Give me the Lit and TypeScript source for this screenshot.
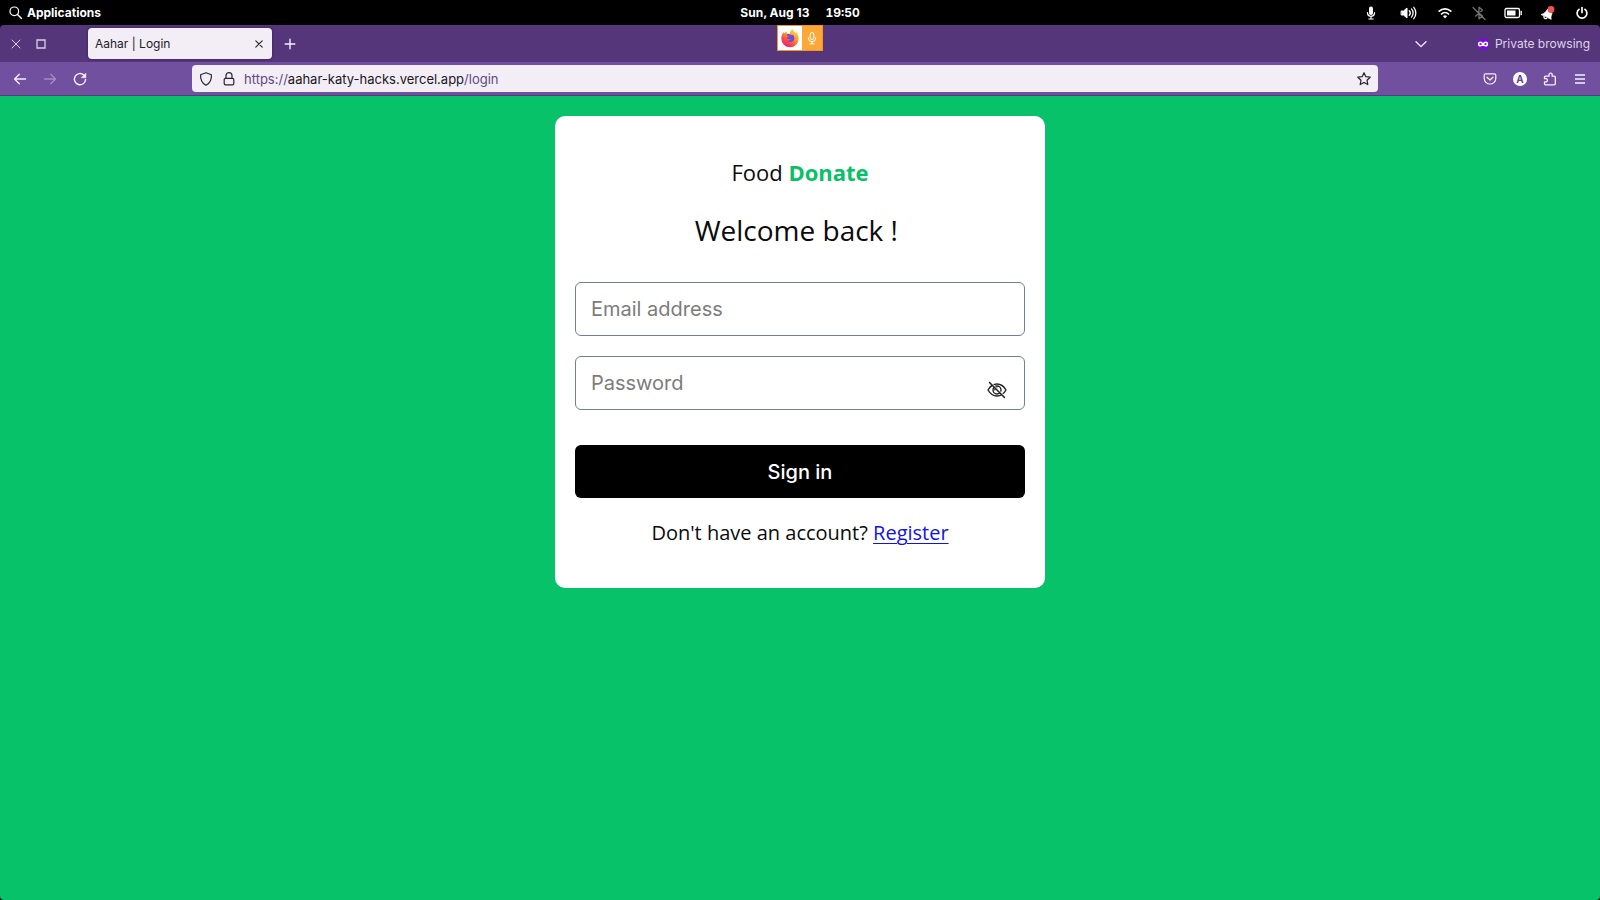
import { LitElement, html, css, svg, type TemplateResult } from "lit";
import { customElement, state } from "lit/decorators.js";

const icon = (body: TemplateResult, w = 16, h = 16) =>
  html`<svg width=${w} height=${h} viewBox="0 0 ${w} ${h}" fill="none" stroke="currentColor" stroke-width="1.2" stroke-linecap="round" stroke-linejoin="round" aria-hidden="true">${body}</svg>`;

const icons = {
  search: icon(svg`<circle cx="6.3" cy="6.3" r="4.3"/><path d="M9.5 9.5 13.5 13.5" stroke-width="1.5"/>`),
  mic: icon(svg`<rect x="7" y="1.500" width="4" height="8.500" rx="2" fill="currentColor" stroke="none"/><path d="M5.500 7.500v1a3.600 3.600 0 0 0 7 0v-1M9 12v2M6.800 14h4.400"/>`, 20),
  speaker: icon(svg`<path d="M1.500 6h2L7 3v10l-3.500-3h-2z" fill="currentColor" stroke-width="1"/><path d="M9.300 5.800a3.200 3.200 0 0 1 0 4.400M11.500 3.900a6 6 0 0 1 0 8.200M13.800 2.300a9 9 0 0 1 0 11.400" stroke-width="1.300"/>`, 20),
  wifi: icon(svg`<path d="M1.200 6.200a8.300 8.300 0 0 1 11.600 0" stroke-width="1.700"/><path d="M3.500 9a5 5 0 0 1 7 0" stroke-width="1.700"/><path d="M5 11.200a3 3 0 0 1 4 0L7 13.400z" fill="currentColor" stroke="none"/>`),
  bluetooth: icon(svg`<path d="M3.500 5 10.500 11 7 13.800V2.200L10.500 5 8.600 6.700M3.500 11.200 5.900 9.200M1 2.500 13 14.500"/>`, 14),
  battery: icon(svg`<rect x="1" y="3.500" width="14.500" height="9" rx="1.500" stroke-width="1.300"/><rect x="3" y="5.500" width="8.500" height="5" fill="currentColor" stroke="none"/><path d="M17.200 6.500v3" stroke-width="1.300"/>`, 18),
  bell: icon(svg`<path d="M1.500 9.500C4.500 8.800 6 6.500 7.800 4L12 8.500C11 10.500 10.800 12 11.100 14z" fill="currentColor" stroke-width=".8"/><path d="M4 11.300c-.5 1.600.9 2.800 2.700 2" stroke-width="1.300"/><circle cx="11" cy="4.500" r="3.400" fill="#ed5353" stroke="none"/>`),
  power: icon(svg`<path d="M5 4.300a4.900 4.900 0 1 0 6 0M8 2.500v5" stroke-width="1.700"/>`),
  close: icon(svg`<path d="M4 4l8 8M12 4l-8 8" stroke-width="1"/>`),
  maximize: icon(svg`<path d="M4 4h8v8H4z" stroke-width="1.300" stroke-linejoin="miter"/>`),
  tabClose: icon(svg`<path d="M4.800 4.800l6.400 6.400M11.200 4.800l-6.400 6.400" stroke-width="1.100"/>`),
  plus: icon(svg`<path d="M8 3.200v9.600M3.200 8h9.600" stroke-width="1.400"/>`),
  chevron: icon(svg`<path d="M3 5.800l5 4.800 5-4.800" stroke-width="1.300"/>`),
  back: icon(svg`<path d="M13.500 8H2.500M7.300 3.200 2.500 8l4.800 4.800" stroke-width="1.300"/>`),
  forward: icon(svg`<path d="M2.500 8h11M8.700 3.200 13.500 8l-4.800 4.800" stroke-width="1.300"/>`),
  reload: icon(svg`<path d="M13.600 8.500A5.600 5.600 0 1 1 11.800 4L13 5.300" stroke-width="1.400"/><path d="M13.800 2.500v4.200H9.600z" fill="currentColor" stroke-width=".6"/>`),
  shield: icon(svg`<path d="M8 1.800 13.400 3.700c.3 4.600-1 8.300-5.400 10.600C3.600 12 2.300 8.300 2.600 3.700z"/>`),
  lock: icon(svg`<rect x="3.200" y="7.300" width="9.600" height="6.600" rx="1.300"/><path d="M5 7.300V4.600a3 3 0 0 1 6 0v2.700"/>`),
  star: icon(svg`<path d="M8 1.700 9.800 5.700 14.200 6.200 11 9.200 11.800 13.600 8 11.400 4.200 13.600 5 9.200 1.800 6.200 6.200 5.700z"/>`),
  pocket: icon(svg`<path d="M3.600 2.800h8.800c.8 0 1.400.6 1.400 1.400v3a5.800 5.800 0 0 1-11.600 0v-3c0-.8.6-1.400 1.400-1.400z"/><path d="M5 6.300l3 2.800 3-2.800" stroke-width="1.300"/>`),
  puzzle: icon(svg`<path d="M3.500 13.800h8.700c.7 0 1.100-.4 1.100-1.100V6.300c0-.7-.4-1.100-1.100-1.100h-2V3.700a1.600 1.600 0 0 0-3.200 0v1.500H3.600c-.7 0-1.100.4-1.100 1.100v1.400h1.300a1.600 1.600 0 0 1 0 3.200H2.500v1.800c0 .7.400 1.100 1 1.100z" stroke-width="1.300"/>`),
  menu: icon(svg`<path d="M3 4h10M3 8h10M3 12h10" stroke-width="1.500" stroke-linecap="butt"/>`),
  mask: icon(svg`<circle cx="8" cy="8" r="6" fill="#7d0be0" stroke="none"/><path d="M8 8C7 6.700 6.300 6.200 5.400 6.200a1.800 1.800 0 0 0 0 3.600C6.300 9.800 7 9.300 8 8s1.700-1.800 2.600-1.800a1.800 1.800 0 0 1 0 3.600C9.700 9.800 9 9.300 8 8z" stroke="#fff" stroke-width="1.500"/>`),
  eyeOff: icon(svg`<path d="M1 10C3.300 6 6.300 4 10 4s6.700 2 9 6c-2.300 4-5.300 6-9 6s-6.700-2-9-6z" stroke-width="1.400"/><circle cx="10" cy="10" r="4" stroke-width="1.400"/><path d="M7.800 10A2.200 2.200 0 0 1 10 7.800" stroke-width="1.100"/><path d="M3.700 2.700 18.200 17.200" stroke="#fff" stroke-width="1.500"/><path d="M2.500 2.500 17.500 17.500" stroke-width="1.500"/>`, 20, 20),
  eye: icon(svg`<path d="M1 10C3.300 6 6.300 4 10 4s6.700 2 9 6c-2.300 4-5.300 6-9 6s-6.700-2-9-6z" stroke-width="1.400"/><circle cx="10" cy="10" r="3.500" stroke-width="1.400"/>`, 20, 20),
};

const firefox = html`<svg width="20" height="20" viewBox="0 0 20 20" aria-hidden="true">
  <defs>
    <linearGradient id="flame" x1="16" y1="2" x2="5" y2="18" gradientUnits="userSpaceOnUse">
      <stop offset="0" stop-color="#ffe14a"/><stop offset=".4" stop-color="#ff9b25"/><stop offset=".75" stop-color="#ff4544"/><stop offset="1" stop-color="#e9257b"/>
    </linearGradient>
  </defs>
  <path d="M3.600 4.200 4.800 5.500C5.300 4.800 5.700 4 6.600 3.600l.2 2C8 5.300 9 5.400 9.800 6c.2-2.200 1-4 3-5 .3 1.800 1.700 2.700 2.700 4l.6-1C18 6 18.700 8 18.700 10.500A8.700 8.700 0 0 1 1.300 10.500C1.300 8 2.200 5.800 3.600 4.200z" fill="url(#flame)"/>
  <path d="M6.500 6.800c1.600-1 3.200-.9 4.300.2h2.300c1.600 1.600 1.700 4.500.2 6-1.700 1.600-4.900 1.500-6.300-.6 1.500.5 2.900.2 3.700-.9-2 .1-2.600-1.100-4.500-1 .5-1 1.600-1.300 2.700-1.400z" fill="#6b4be0"/>
</svg>`;

/** Desktop panel: launcher, clock and status indicators. */
@customElement("system-panel")
export class SystemPanel extends LitElement {
  static styles = css`
    :host { display: block; background: #000; color: #fff; font: 700 12px/24px Inter, sans-serif; }
    .panel { position: relative; display: grid; grid-template-columns: 1fr auto 1fr; align-items: center; height: 25px; padding: 0 8px; }
    .launcher { display: flex; align-items: center; gap: 3px; justify-self: start; padding: 0; border: 0; background: none; color: inherit; font: inherit; }
    .clock { display: flex; gap: 16px; }
    .time { font-variant-numeric: tabular-nums; }
    .status { display: flex; gap: 18px; justify-self: end; margin-right: 2px; }
    .off { color: #777; }
    svg { display: block; }
    .sharing { position: absolute; z-index: 2; top: 25px; left: 50%; transform: translateX(-50%); display: flex; border: 1px solid #f89522; background: #fba837; }
    .app { background: #fff; padding: 2px; }
    .capture { display: grid; place-items: center; width: 20px; }
  `;
  render() {
    return html`<header class="panel">
      <button class="launcher">${icons.search}Applications</button>
      <div class="clock"><span>Sun, Aug 13</span><span class="time">19:50</span></div>
      <div class="status">
        <span>${icons.mic}</span><span>${icons.speaker}</span><span>${icons.wifi}</span>
        <span class="off">${icons.bluetooth}</span><span>${icons.battery}</span><span>${icons.bell}</span><span>${icons.power}</span>
      </div>
      <div class="sharing">
        <span class="app">${firefox}</span>
        <span class="capture">${icon(svg`<rect x="6.200" y="2.500" width="3.600" height="7" rx="1.800" stroke-width="1"/><path d="M4.300 7.500v.5a3.700 3.700 0 0 0 7.400 0v-.5M8 11.800v1.900M6 13.800h4" stroke-width="1"/>`)}</span>
      </div>
    </header>`;
  }
}

/** Browser window frame: tab strip and navigation toolbar. */
@customElement("browser-chrome")
export class BrowserChrome extends LitElement {
  static styles = css`
    :host { display: block; font: 400 12px/16px Inter, sans-serif; color: #f6f0fb; }
    button { display: grid; place-items: center; padding: 0; border: 0; background: none; color: inherit; }
    svg { display: block; }
    .tabs { display: flex; align-items: center; box-sizing: border-box; height: 37px; padding: 0 10px 0 8px; background: #55367a; border-radius: 4px 4px 0 0; }
    .window { display: flex; gap: 9px; margin-right: 39px; color: #d9cfe4; }
    .tab { display: flex; align-items: center; justify-content: space-between; box-sizing: border-box; width: 184px; height: 31px; padding: 0 5px 0 7px; border-radius: 4px; background: #f3edf5; color: #222027; box-shadow: 0 0 3px #35204f; }
    .new { margin-left: 10px; }
    .list { margin-left: auto; }
    .private { display: flex; align-items: center; gap: 4px; margin-left: 46px; font-size: 12px; color: #ded3e8; }
    .bar { display: grid; grid-template-columns: auto 1fr 11.400fr 1fr auto; align-items: center; height: 33px; padding: 0 12px; background: #7250a0; border-bottom: 1px solid #573a80; }
    .nav, .actions { display: flex; gap: 14px; }
    .dim { color: #a48bc5; }
    .address { grid-column: 3; display: flex; align-items: center; gap: 7px; height: 27px; padding: 0 6px; border-radius: 4px; background: #f3edf5; color: #29252f; }
    .url { flex: 1; font-size: 13px; color: #604982; }
    .host { color: #19171c; }
    .actions { grid-column: 5; }
    .avatar { width: 14px; height: 14px; margin: 1px; border-radius: 50%; background: #fff; color: #65449a; font: 700 10px/14px Inter, sans-serif; }
  `;
  render() {
    return html`
      <div class="tabs">
        <div class="window">
          <button aria-label="Close window">${icons.close}</button>
          <button aria-label="Maximize">${icons.maximize}</button>
        </div>
        <div class="tab"><span>Aahar | Login</span><button aria-label="Close tab">${icons.tabClose}</button></div>
        <button class="new" aria-label="New tab">${icons.plus}</button>
        <button class="list" aria-label="List all tabs">${icons.chevron}</button>
        <div class="private">${icons.mask}<span>Private browsing</span></div>
      </div>
      <nav class="bar">
        <div class="nav">
          <button aria-label="Back">${icons.back}</button>
          <button class="dim" aria-label="Forward">${icons.forward}</button>
          <button aria-label="Reload">${icons.reload}</button>
        </div>
        <div class="address">
          ${icons.shield}${icons.lock}
          <div class="url">https://<span class="host">aahar-katy-hacks.vercel.app</span>/login</div>
          <button aria-label="Bookmark this page">${icons.star}</button>
        </div>
        <div class="actions">
          <button aria-label="Save to Pocket">${icons.pocket}</button>
          <button class="avatar" aria-label="Account">A</button>
          <button aria-label="Extensions">${icons.puzzle}</button>
          <button aria-label="Menu">${icons.menu}</button>
        </div>
      </nav>`;
  }
}

/** Sign-in card. */
@customElement("login-card")
export class LoginCard extends LitElement {
  static styles = css`
    :host { display: block; width: 100%; max-width: 490px; }
    .card { box-sizing: border-box; padding: 40px 20px; border-radius: 10px; background: #fff; color: #0b0b0b; font-family: "Open Sans", "Noto Sans", sans-serif; text-align: center; }
    .brand { margin: 0 0 22px; font-size: 22px; line-height: 32px; }
    .accent { color: #06c167; font-weight: 700; }
    .title { margin: 0 0 32px; font-size: 28px; line-height: 40px; font-weight: 400; }
    .field { position: relative; margin-bottom: 20px; }
    .input { box-sizing: border-box; display: block; width: 100%; height: 54px; padding: 0 15px; border: 1px solid #708090; border-radius: 6px; background: #fff; color: #111; font: 400 20px/24px Inter, sans-serif; }
    .input::placeholder { color: #7c7c7c; opacity: 1; }
    .toggle { position: absolute; right: 18px; bottom: 10px; padding: 0; border: 0; background: none; color: #222; }
    .toggle svg { display: block; }
    .submit { width: 100%; height: 53px; margin: 15px 0 20px; border: 0; border-radius: 6px; background: #000; color: #fff; font: 500 20px/24px Inter, sans-serif; }
    .register { margin: 0; font-size: 20px; line-height: 30px; }
    .link { color: #1111ee; text-decoration-thickness: 1px; text-underline-offset: 3px; }
  `;
  @state() private shown = false;
  render() {
    return html`<form class="card" @submit=${(e: Event) => e.preventDefault()}>
      <p class="brand">Food <span class="accent">Donate</span></p>
      <h1 class="title">Welcome back !&nbsp;</h1>
      <div class="field">
        <input class="input" type="email" aria-label="Email address" placeholder="Email address" />
      </div>
      <div class="field">
        <input class="input" type=${this.shown ? "text" : "password"} aria-label="Password" placeholder="Password" />
        <button class="toggle" type="button" aria-label="Show password" @click=${() => (this.shown = !this.shown)}>${this.shown ? icons.eye : icons.eyeOff}</button>
      </div>
      <button class="submit" type="submit">Sign in</button>
      <p class="register">Don't have an account? <a class="link" href="#register">Register</a></p>
    </form>`;
  }
}

@customElement("app-root")
export class AppRoot extends LitElement {
  static styles = css`
    :host { display: flex; flex-direction: column; min-height: 100vh; background: #000; }
    .page { flex: 1; display: flex; justify-content: center; align-items: flex-start; padding: 20px; background: #08c269; border-radius: 0 0 4px 4px; }
  `;
  render() {
    return html`<system-panel></system-panel><browser-chrome></browser-chrome><main class="page"><login-card></login-card></main>`;
  }
}
